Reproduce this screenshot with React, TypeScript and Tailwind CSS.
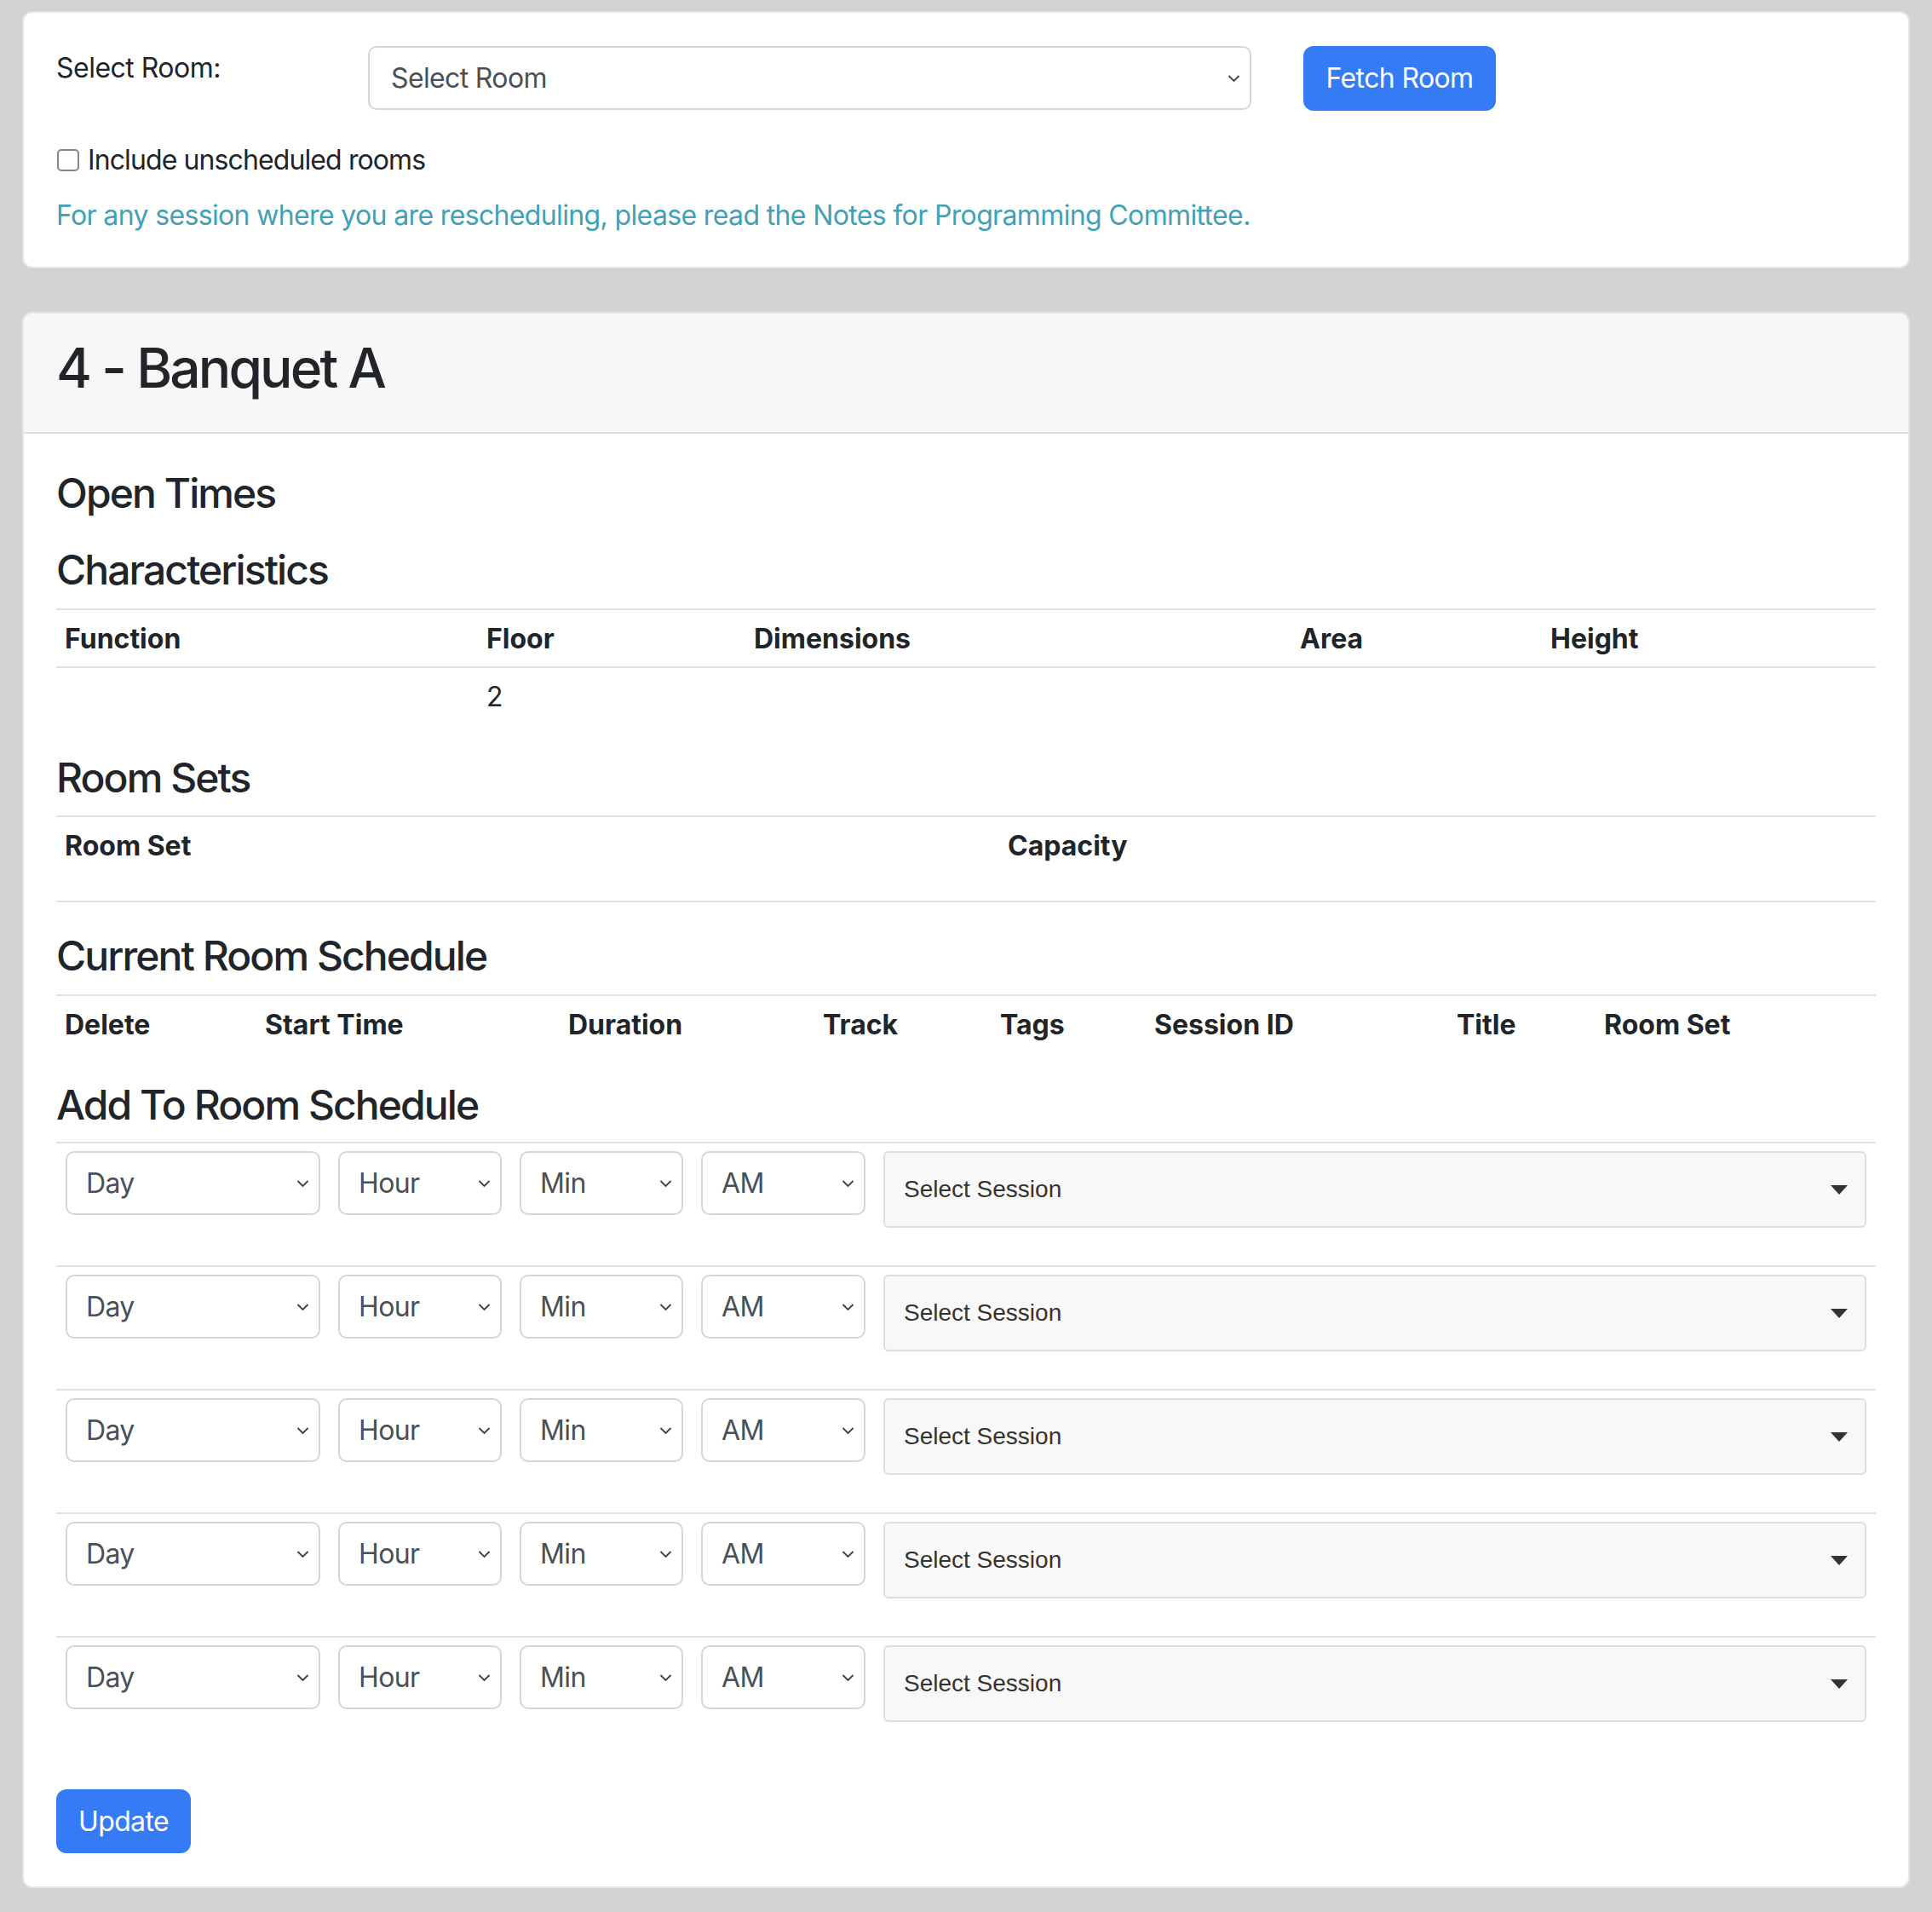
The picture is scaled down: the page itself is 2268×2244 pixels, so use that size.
const sans = "font-['Inter','Noto_Sans',sans-serif]";

const Chevron = () => (
  <svg width="15" height="10" viewBox="0 0 15 10" className="shrink-0">
    <path d="M1.5 2 L7.5 8 L13.5 2" fill="none" stroke="#3f3f44" strokeWidth="1.8" />
  </svg>
);

const NativeSelect = ({ label, className }: { label: string; className: string }) => (
  <div
    className={`flex items-center justify-between rounded-[10px] border-2 border-[#d3d7db] bg-white pl-[22px] pr-[11px] text-[32px] tracking-[-0.02em] text-[#495057] ${className}`}
  >
    <span>{label}</span>
    <Chevron />
  </div>
);

const SessionSelect = () => (
  <div className="flex h-[90px] flex-1 items-center justify-between rounded-[6px] border-2 border-[#dedede] bg-[#f8f8f8] pl-[22px] pr-[20px]">
    <span className="font-['Liberation_Sans',Arial,sans-serif] text-[28px] text-[#333]">Select Session</span>
    <svg width="20" height="11" viewBox="0 0 20 11">
      <path d="M0 0 H20 L10 11 Z" fill="#333" />
    </svg>
  </div>
);

const HeaderRow = ({ cols }: { cols: { label: string; w: string }[] }) => (
  <div className="flex border-t-2 border-[#dee2e6] pt-[10px] pb-[8px] text-[32px] leading-[48px] font-bold text-[#212529]">
    {cols.map((c) => (
      <div key={c.label} className={`px-[10px] ${c.w}`}>
        {c.label}
      </div>
    ))}
  </div>
);

const Heading = ({ children, className = "" }: { children: string; className?: string }) => (
  <h4 className={`text-[48px] leading-[58px] font-medium tracking-[-0.04em] text-[#212529] ${className}`}>{children}</h4>
);

export default function App() {
  const rows = [0, 1, 2, 3, 4];

  return (
    <div className={`min-h-screen bg-[#d3d3d3] px-[26px] pt-[13px] pb-[30px] ${sans}`}>
      <div className="rounded-[12px] border-2 border-[#e6e6e6] bg-white px-[38px] pt-[39px] pb-[36px] text-[32px] text-[#212529]">
        <div className="flex items-start">
          <div className="w-[366px] pt-[2px] leading-[48px] tracking-[-0.016em]">Select Room:</div>
          <NativeSelect label="Select Room" className="h-[75px] w-[1037px] pl-[25px]" />
          <button className="ml-[61px] h-[76px] w-[226px] rounded-[12px] bg-[#367bf6] text-[32px] tracking-[-0.02em] text-white">
            Fetch Room
          </button>
        </div>
        <label className="mt-[34px] flex items-center leading-[48px] tracking-[-0.028em]">
          <span className="ml-[1px] mr-[10px] h-[26px] w-[26px] rounded-[5px] border-2 border-[#85858d] bg-white" />
          Include unscheduled rooms
        </label>
        <p className="mt-[17px] leading-[48px] tracking-[-0.02em] text-[#44a0b4]">
          For any session where you are rescheduling, please read the Notes for Programming Committee.
        </p>
      </div>

      <div className="mt-[51px] overflow-hidden rounded-[12px] border-2 border-[#e6e6e6] bg-white">
        <div className="border-b-2 border-[#dfdfdf] bg-[#f7f7f7] px-[38px] pt-[25px] pb-[37px]">
          <h2 className="text-[64px] leading-[77px] font-medium tracking-[-0.045em] text-[#212529]">4 - Banquet A</h2>
        </div>

        <div className="px-[38px] pt-[41px] pb-[39px]">
          <Heading className="mb-[32px]">Open Times</Heading>
          <Heading className="mb-[16px]">Characteristics</Heading>
          <div className="border-b-2 border-[#dee2e6]">
            <HeaderRow
              cols={[
                { label: "Function", w: "w-[495px]" },
                { label: "Floor", w: "w-[314px]" },
                { label: "Dimensions", w: "w-[641px]" },
                { label: "Area", w: "w-[294px]" },
                { label: "Height", w: "flex-1" },
              ]}
            />
          </div>
          <div className="flex pt-[10px] pb-[8px] text-[32px] leading-[48px] text-[#212529]">
            <div className="w-[495px] px-[10px]" />
            <div className="w-[314px] px-[10px]">2</div>
          </div>

          <Heading className="mt-[34px] mb-[15px]">Room Sets</Heading>
          <div className="border-b-2 border-[#dee2e6]">
            <HeaderRow
              cols={[
                { label: "Room Set", w: "w-[1107px]" },
                { label: "Capacity", w: "flex-1" },
              ]}
            />
            <div className="h-[32px]" />
          </div>

          <Heading className="mt-[34px] mb-[16px]">Current Room Schedule</Heading>
          <HeaderRow
            cols={[
              { label: "Delete", w: "w-[235px]" },
              { label: "Start Time", w: "w-[356px]" },
              { label: "Duration", w: "w-[299px]" },
              { label: "Track", w: "w-[208px]" },
              { label: "Tags", w: "w-[181px]" },
              { label: "Session ID", w: "w-[355px]" },
              { label: "Title", w: "w-[173px]" },
              { label: "Room Set", w: "flex-1" },
            ]}
          />

          <Heading className="mt-[33px] mb-[14px]">Add To Room Schedule</Heading>
          <div>
            {rows.map((r) => (
              <div key={r} className="flex items-start gap-[21px] border-t-2 border-[#dee2e6] px-[11px] pt-[9px] pb-[44px]">
                <NativeSelect label="Day" className="h-[75px] w-[299px]" />
                <NativeSelect label="Hour" className="h-[75px] w-[192px]" />
                <NativeSelect label="Min" className="h-[75px] w-[192px]" />
                <NativeSelect label="AM" className="h-[75px] w-[193px]" />
                <SessionSelect />
              </div>
            ))}
          </div>

          <button className="mt-[35px] h-[75px] w-[158px] rounded-[12px] bg-[#367bf6] text-[32px] tracking-[-0.02em] text-white">
            Update
          </button>
        </div>
      </div>
    </div>
  );
}
